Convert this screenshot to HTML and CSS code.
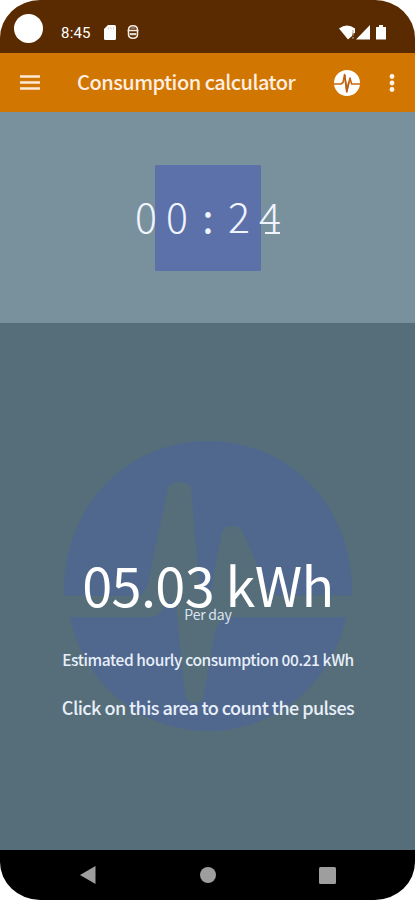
FILE: index.html
```html
<!DOCTYPE html>
<html lang="en">

<head>
  <meta charset="UTF-8">
  <meta name="viewport" content="width=device-width, initial-scale=1.0">
  <title>Consumption calculator</title>
  <link rel="stylesheet" href="styles.css">
</head>
<body>
  <div class="phone">
    <div class="status-bar">
      <span class="camera"></span>
      <span class="clock">8:45</span>
      <svg class="sd-icon" width="12" height="15" viewBox="0 0 12 15">
        <path d="M4 0h6.500a1.500 1.500 0 0 1 1.500 1.500v12a1.500 1.500 0 0 1-1.500 1.500h-9A1.500 1.500 0 0 1 0 13.500V4z" fill="#fff"/>
        <path d="M4.500 2v2.500M7 2v2.500M9.500 2v2.500" stroke="#c9bab0" stroke-width=".7"/>
      </svg>
      <svg class="face-icon" width="12" height="14" viewBox="0 0 12 14">
        <path d="M1.500 5C1.500 2 3.500.8 6 .8S10.500 2 10.500 5M.5 5.500h11M1.500 6v3.500C1.500 12 3.500 13.200 6 13.200s4.500-1.200 4.500-3.700V6" fill="none" stroke="#f6ece5" stroke-width="1.500"/>
        <path d="M3.500 3h5M3 8.500h6v1.300H3z" fill="#f6ece5" stroke="#f6ece5" stroke-width=".7"/>
      </svg>
      <svg class="signal-icons" width="48" height="15" viewBox="0 0 48 15">
        <path d="M0 3.500Q8-2.500 16 3.500V8l-3 .5V11l-4 3.500z" fill="#fff"/>
        <path d="M14 5v5.500M14 12v1.500" stroke="#c6b5aa" stroke-width="1.300"/>
        <path d="M31 0v14.500H17z" fill="#fff"/>
        <path d="M37.500 2h2.500V0h4v2h2.500q.5 0 .5.500v11.500q0 .5-.5.500h-9q-.5 0-.5-.5V2.500q0-.5.500-.5z" fill="#fff"/>
      </svg>
    </div>

    <div class="toolbar">
      <svg class="menu-icon" width="20" height="15" viewBox="0 0 20 15">
        <path d="M0 1.500h20M0 7.500h20M0 13.500h20" stroke="#ffe9d8" stroke-width="2.400"/>
      </svg>
      <h1 class="title">Consumption calculator</h1>
      <svg class="pulse-icon" width="26" height="26" viewBox="0 0 26 26">
        <circle cx="13" cy="13" r="13" fill="#fff"/>
        <path d="M0 14h7l2-1.500 1.600-8 2.100 17.500 3.300-14 1.600 6H26" fill="none" stroke="#c9680f" stroke-width="1.600" stroke-linejoin="round"/>
        <path d="M10.800 5l2 16 2-9" fill="none" stroke="#b85d18" stroke-width="1.500" stroke-linejoin="round"/>
      </svg>
      <svg class="more-icon" width="6" height="18" viewBox="0 0 6 18">
        <g fill="#fff3e9">
          <circle cx="3" cy="2.500" r="2.400"/>
          <circle cx="3" cy="9" r="2.400"/>
          <circle cx="3" cy="15.500" r="2.400"/>
        </g>
      </svg>
    </div>

    <div class="timer">
      <div class="timer-box">
        <span>0</span><span>0</span><span class="colon">:</span><span>2</span><span class="four">4</span>
      </div>
    </div>

    <div class="counter">
      <!-- pulse logo behind the readings -->
      <svg class="watermark" width="288" height="290" viewBox="0 0 288 290">
        <path fill="#50688e" d="M0 154.500C-2 66 62 0 144 0s146 66 144 154.500H215c-9 0-11-2-13-9L179 91q-3-6-10-6-9 0-11 6l-7 36q-3 27-9 27-6 0-8-27l-7-80q-1-6-11-6-9 0-12 6L84 142c-2 9-6 13-14 13z"/>
        <path fill="#50688e" d="M6 176h79c10 0 12-4 15-12q6-7 12 0c3 30 7 78 10 93 3 7 14 7 17 0l12-66c3-9 8-15 18-15H282C269 241 213 290 144 290S19 241 6 176z"/>
      </svg>
      <div class="readings">
        <div class="total">05.03 kWh</div>
        <div class="period">Per day</div>
        <div class="hourly">Estimated hourly consumption 00.21 kWh</div>
        <div class="hint">Click on this area to count the pulses</div>
      </div>
    </div>

    <div class="nav-bar">
      <svg width="16" height="18" viewBox="0 0 16 18"><path d="M15.500 0v18L0 9z" fill="#9e9e9e"/></svg>
      <svg width="16" height="16" viewBox="0 0 16 16"><circle cx="8" cy="8" r="8" fill="#9e9e9e"/></svg>
      <svg width="17" height="17" viewBox="0 0 17 17"><rect width="17" height="17" rx="1.500" fill="#9e9e9e"/></svg>
    </div>
  </div>
</body>
</html>
```
FILE: styles.css
```css
/* General styles */
* {
  box-sizing: border-box;
}

body {
  margin: 0;
  background-color: #fff;
  font-family: "Noto Sans CJK SC", "Open Sans", sans-serif;
  color: #fff;
}

.phone {
  display: flex;
  flex-direction: column;
  width: 415px;
  height: 900px;
  overflow: hidden;
  border-radius: 40px / 38px;
}

svg {
  display: block;
  flex: none;
}

/* Status bar */
.status-bar {
  display: flex;
  align-items: flex-start;
  height: 53px;
  padding: 14px 28px 0 14px;
  background-color: #5a2b00;
}

.camera {
  width: 29px;
  height: 29px;
  border-radius: 50%;
  background-color: #fff;
}

.clock {
  width: 43px;
  margin: 9px 0 0 18px;
  font-family: Roboto, sans-serif;
  font-size: 15px;
  line-height: 20px;
  letter-spacing: 0.2px;
}

.sd-icon {
  margin-top: 11px;
}

.face-icon {
  margin: 11px 0 0 11px;
}

.signal-icons {
  margin: 11px 0 0 auto;
}

/* Toolbar */
.toolbar {
  display: flex;
  align-items: center;
  height: 59px;
  padding: 0 20px;
  background-color: #d17600;
}

.title {
  width: 257px;
  margin: -2px 0 0 37px;
  font-size: 20px;
  font-weight: 500;
  line-height: 30px;
  letter-spacing: -0.5px;
  white-space: nowrap;
  color: #ffeee2;
}

.pulse-icon {
  margin-right: 29px;
}

/* Timer */
.timer {
  display: flex;
  justify-content: center;
  height: 211px;
  padding: 53px 0 0 1px;
  background-color: #78919c;
}

.timer-box {
  display: flex;
  align-items: center;
  justify-content: center;
  width: 106px;
  height: 106px;
  padding-bottom: 6px;
  background-color: #5c70aa;
  font-size: 41px;
  font-weight: 300;
  line-height: 60px;
  color: #f0f4ff;
}

.timer-box span {
  flex: none;
  width: 31px;
  text-align: center;
}

.timer-box .colon {
  font-weight: 400;
}

.timer-box .four {
  position: relative;
}

/* foot of the slab figure */
.four::after {
  content: "";
  position: absolute;
  left: 10px;
  bottom: 11px;
  width: 15px;
  height: 2px;
  background-color: #f0f4ff;
}

/* Counter area */
.counter {
  position: relative;
  flex: 1;
  background-color: #556e79;
  text-align: center;
}

.watermark {
  position: absolute;
  top: 118px;
  left: 64px;
}

.readings {
  position: relative;
  padding: 226px 0 0 1px;
  white-space: nowrap;
}

.total {
  font-size: 54px;
  line-height: 70px;
  letter-spacing: -0.6px;
}

.period {
  margin-top: -15px;
  font-size: 14px;
  line-height: 20px;
  letter-spacing: -0.2px;
  color: #dce4f0;
}

.hourly {
  margin-top: 23px;
  font-size: 15.5px;
  font-weight: 500;
  line-height: 24px;
  letter-spacing: -0.4px;
  color: #e8effa;
}

.hint {
  margin-top: 22px;
  font-size: 18px;
  font-weight: 500;
  line-height: 28px;
  letter-spacing: -0.56px;
  color: #e8effa;
}

/* Navigation bar */
.nav-bar {
  display: flex;
  align-items: center;
  justify-content: space-between;
  height: 50px;
  padding: 0 79px 0 80px;
  background-color: #000;
}
```
